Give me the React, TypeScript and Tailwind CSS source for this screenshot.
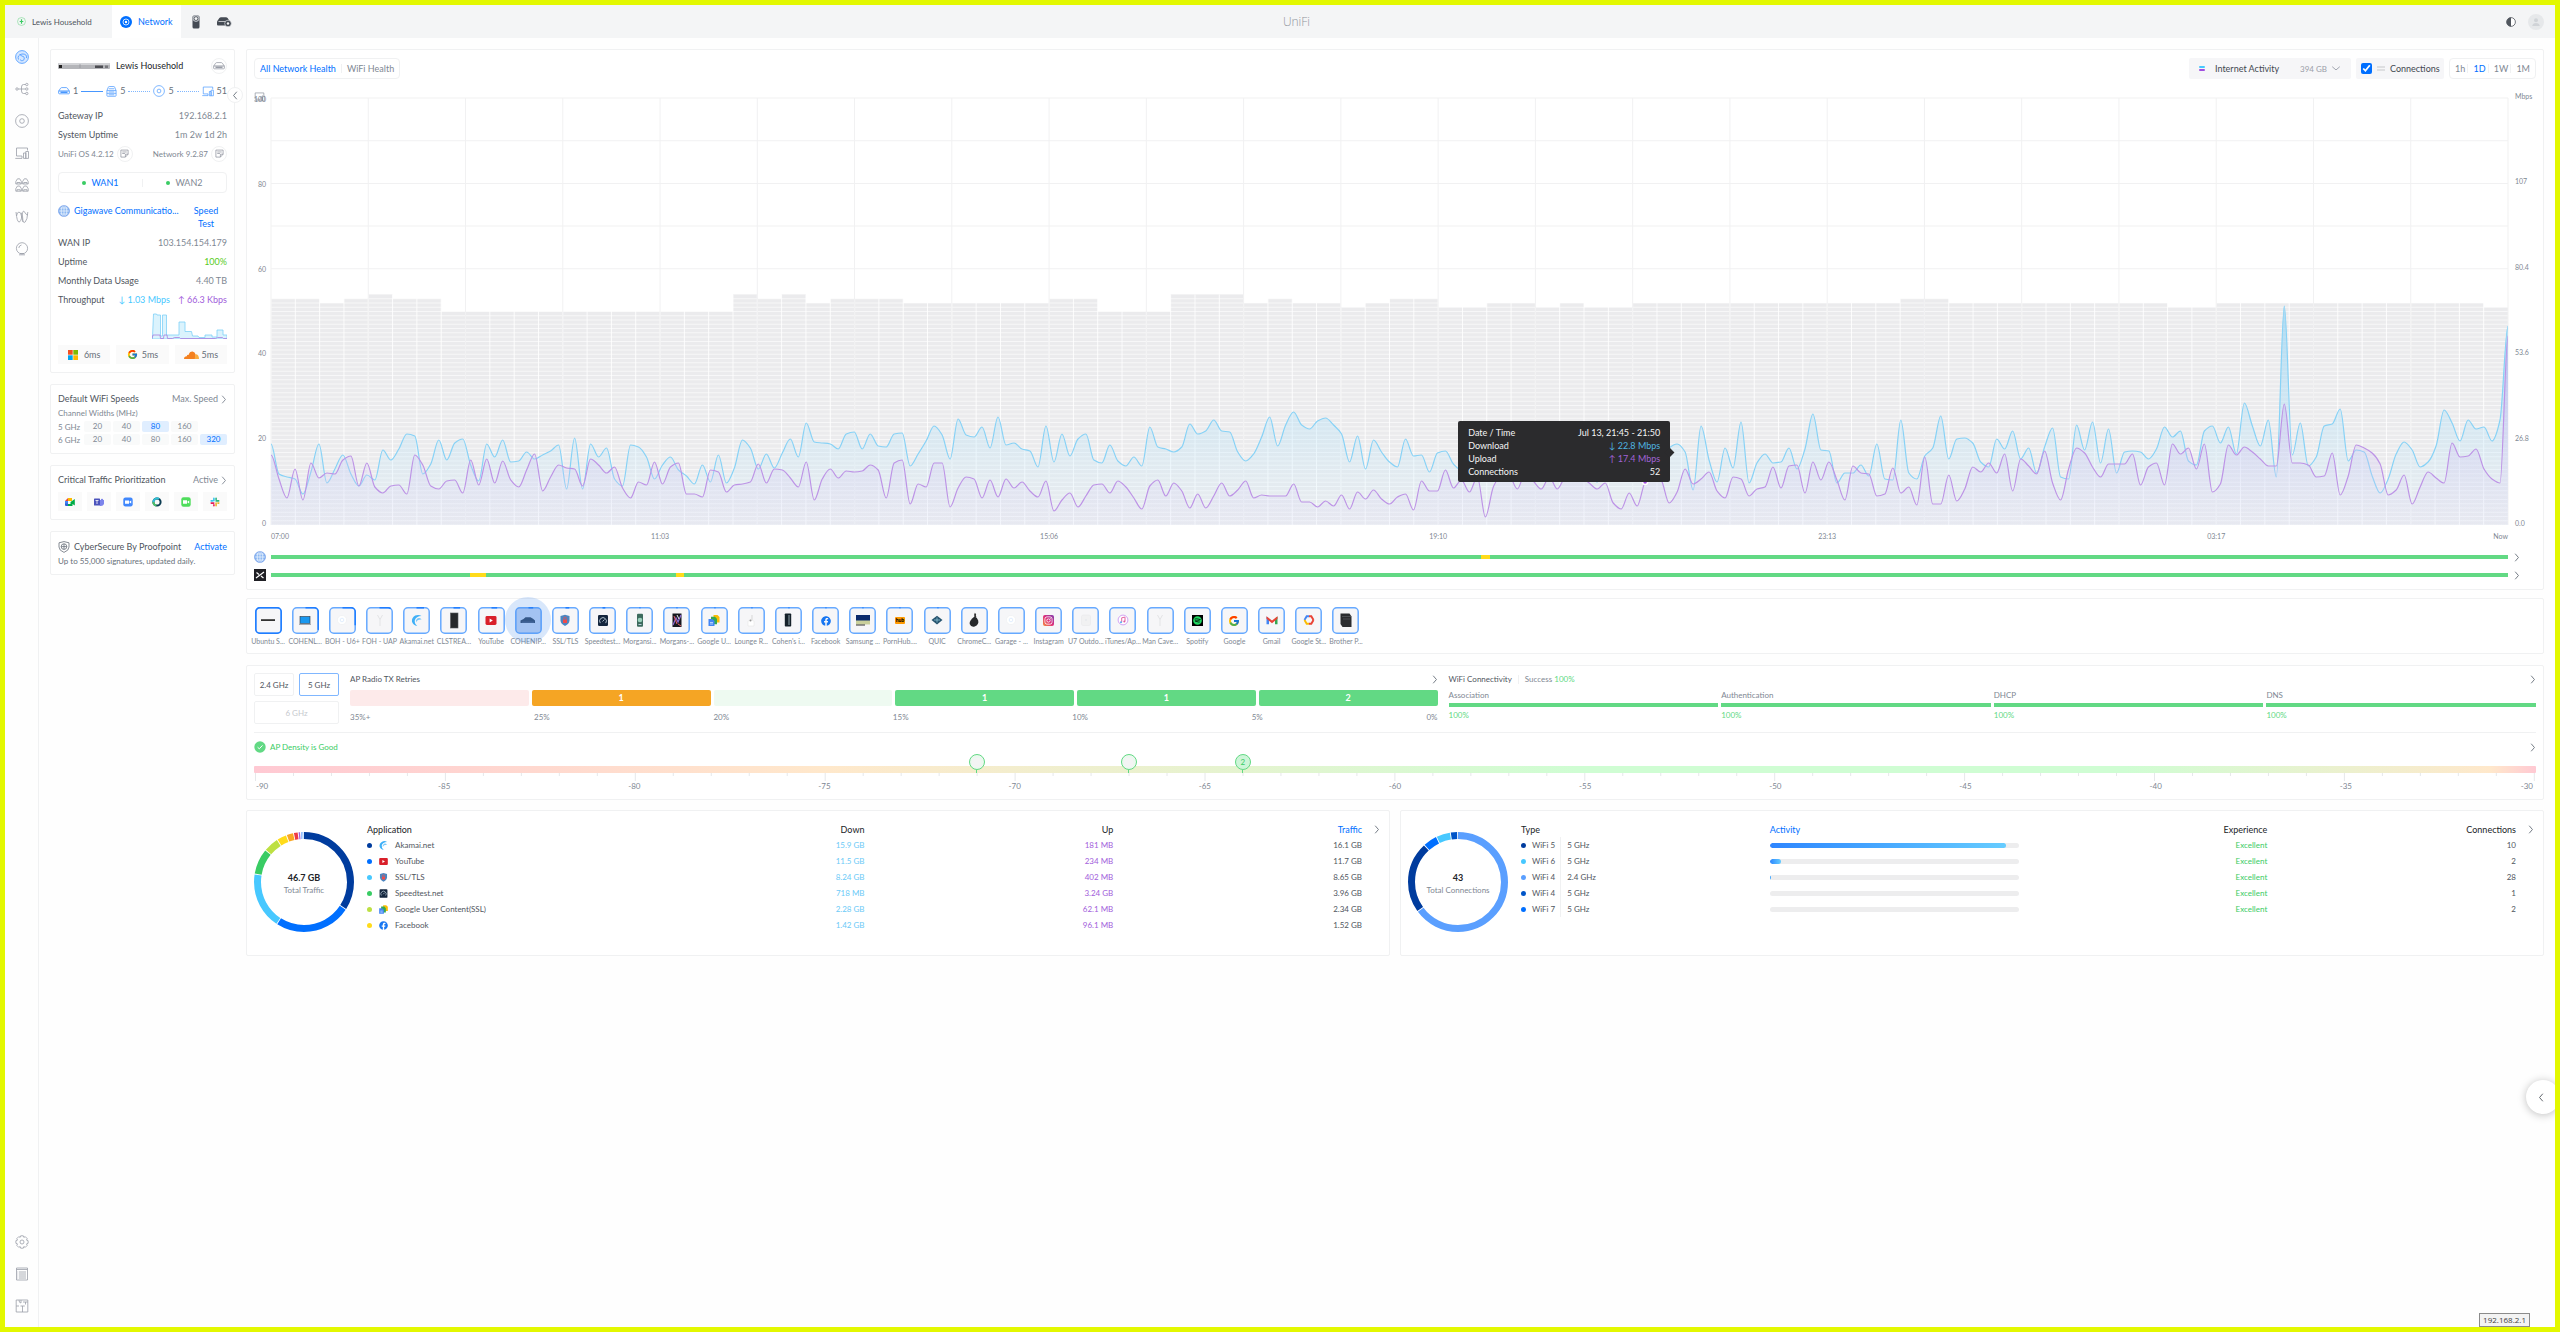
import { useState, type ReactNode } from "react";
import { FcGoogle } from "react-icons/fc";
import { FaFacebook, FaInstagram, FaSpotify } from "react-icons/fa";

const BAR_COUNTS = [
  53, 53, 52, 53, 54, 53, 53, 50, 50, 50, 50, 50, 50, 50, 50, 50, 50, 50, 50, 54, 53, 54, 52, 53, 53, 53, 52, 52, 52,
  52, 52, 52, 53, 53, 50, 50, 50, 54, 54, 54, 52, 53, 52, 52, 51, 52, 53, 53, 51, 51, 52, 52, 51, 52, 51, 51, 52, 52,
  52, 52, 52, 52, 52, 52, 52, 52, 52, 53, 53, 52, 52, 52, 52, 52, 52, 52, 52, 52, 51, 51, 52, 52, 52, 52, 52, 52, 52,
  52, 52, 52, 52, 51,
];

const DOWNLOAD = [
  81, 51, 48, 46, 31, 53, 81, 42, 56, 70, 51, 39, 50, 45, 75, 65, 76, 91, 89, 51, 61, 85, 65, 82, 86, 60, 44, 81, 68,
  85, 63, 64, 73, 66, 70, 74, 80, 36, 87, 36, 81, 68, 77, 46, 39, 80, 78, 68, 46, 60, 68, 55, 49, 41, 60, 43, 70, 42,
  57, 85, 77, 56, 71, 57, 72, 86, 68, 102, 83, 82, 81, 76, 91, 93, 76, 91, 79, 78, 91, 92, 59, 71, 84, 99, 90, 66,
  106, 90, 88, 98, 77, 108, 80, 82, 76, 74, 58, 99, 63, 91, 69, 86, 91, 65, 62, 80, 64, 59, 68, 59, 98, 78, 76, 73,
  78, 101, 91, 94, 105, 94, 93, 73, 64, 71, 88, 108, 79, 100, 113, 100, 96, 104, 107, 100, 91, 63, 89, 56, 85, 73, 63,
  58, 86, 69, 70, 53, 72, 74, 61, 55, 80, 60, 48, 70, 62, 85, 66, 50, 72, 80, 58, 66, 75, 62, 70, 58, 43, 60, 72, 85,
  64, 60, 73, 88, 60, 77, 81, 73, 35, 99, 65, 43, 77, 57, 103, 42, 62, 71, 62, 63, 77, 56, 76, 111, 75, 74, 42, 52,
  52, 60, 49, 81, 46, 45, 105, 52, 46, 69, 77, 109, 66, 86, 87, 82, 63, 58, 86, 76, 94, 66, 77, 52, 78, 97, 48, 46,
  100, 75, 103, 62, 96, 52, 73, 74, 73, 66, 76, 98, 88, 94, 64, 60, 94, 99, 82, 98, 71, 122, 99, 79, 105, 48, 219, 70,
  102, 59, 68, 99, 101, 116, 64, 75, 73, 49, 32, 46, 71, 83, 75, 58, 63, 79, 115, 102, 84, 105, 96, 98, 84, 105, 199,
];

const UPLOAD = [
  70, 46, 27, 56, 25, 62, 47, 52, 51, 65, 69, 39, 62, 38, 32, 39, 40, 31, 70, 60, 39, 36, 44, 45, 32, 65, 40, 66, 42,
  64, 45, 38, 55, 71, 34, 48, 60, 57, 56, 39, 66, 60, 52, 58, 37, 27, 43, 40, 63, 41, 58, 62, 31, 31, 28, 55, 53, 33,
  40, 41, 43, 61, 42, 56, 55, 47, 38, 63, 25, 46, 56, 47, 54, 53, 54, 60, 55, 27, 62, 65, 21, 41, 38, 62, 62, 18, 37,
  48, 46, 27, 45, 28, 46, 37, 43, 34, 28, 44, 14, 25, 32, 18, 29, 40, 41, 32, 44, 38, 27, 16, 39, 45, 29, 42, 34, 17,
  31, 17, 29, 42, 29, 35, 44, 27, 30, 29, 29, 29, 41, 23, 23, 18, 24, 19, 30, 16, 33, 26, 35, 26, 21, 28, 31, 15, 44,
  34, 34, 55, 37, 45, 33, 48, 8, 38, 50, 49, 36, 52, 44, 36, 48, 36, 48, 52, 48, 42, 36, 42, 22, 16, 32, 19, 43, 50,
  45, 22, 33, 56, 41, 46, 53, 34, 27, 48, 46, 29, 36, 38, 58, 37, 59, 60, 32, 63, 45, 63, 45, 25, 59, 52, 51, 29, 31,
  57, 32, 38, 20, 68, 21, 21, 50, 24, 36, 58, 53, 62, 52, 71, 34, 66, 59, 51, 74, 42, 25, 56, 77, 72, 58, 48, 61, 61,
  61, 71, 40, 58, 62, 40, 81, 71, 77, 56, 81, 33, 41, 80, 70, 78, 73, 66, 59, 59, 121, 62, 62, 60, 48, 49, 72, 30, 49,
  80, 77, 72, 61, 30, 35, 50, 21, 38, 53, 47, 42, 82, 68, 69, 76, 56, 46, 42, 189,
];

const CHART_W = 2236;
const CHART_H = 427;

// monotone cubic through evenly spaced samples
function linePath(values: number[]) {
  const dx = CHART_W / (values.length - 1);
  const slope = values.map((v, i) => {
    if (i === 0 || i === values.length - 1) return 0;
    const a = v - values[i - 1];
    const b = values[i + 1] - v;
    if (a * b <= 0) return 0;
    return (2 * a * b) / (a + b);
  });
  let d = `M0 ${CHART_H - values[0]}`;
  for (let i = 1; i < values.length; i++) {
    const x0 = (i - 1) * dx;
    const x1 = i * dx;
    const c0 = CHART_H - values[i - 1] - slope[i - 1] / 3;
    const c1 = CHART_H - values[i] + slope[i] / 3;
    d += `C${(x0 + dx / 3).toFixed(1)} ${c0.toFixed(1)} ${(x1 - dx / 3).toFixed(1)} ${c1.toFixed(1)} ${x1.toFixed(1)} ${CHART_H - values[i]}`;
  }
  return d;
}

const card = "rounded-[2px] border border-[#f0f1f2] bg-white";

function Chevron({ className = "" }: { className?: string }) {
  return (
    <svg viewBox="0 0 6 10" className={`h-[9px] w-[6px] shrink-0 ${className}`} fill="none" stroke="currentColor">
      <path d="M1 0.8L4.6 5L1 9.2" />
    </svg>
  );
}

function Globe() {
  return (
    <svg viewBox="0 0 12 12" className="h-3 w-3 shrink-0" fill="none">
      <circle cx="6" cy="6" r="5.6" fill="#8db9f3" />
      <path d="M6 .4v11.2M.4 6h11.2M1.4 3h9.2M1.4 9h9.2" stroke="#fff" strokeWidth=".6" />
      <ellipse cx="6" cy="6" rx="2.8" ry="5.6" stroke="#fff" strokeWidth=".6" />
      <circle cx="6" cy="6" r="5.4" stroke="#6b98e8" strokeWidth=".7" />
    </svg>
  );
}

function GatewayIcon() {
  return (
    <svg viewBox="0 0 12 8" className="h-2 w-3" fill="none" stroke="currentColor" strokeWidth=".8">
      <path d="M.6 4.2L2.6 1.2Q3 .6 3.8 .6h4.4Q9 .6 9.4 1.2L11.4 4.2v1.8q0 .8-.8.8H1.4q-.8 0-.8-.8z" />
      <path d="M.6 4h10.8M2.5 5.4h7" strokeWidth="1.1" />
    </svg>
  );
}

function SwitchIcon() {
  return (
    <svg viewBox="0 0 12 12" className="h-[11px] w-[11px]" fill="none" stroke="currentColor" strokeWidth=".8">
      <path d="M1 5l1.5-3.6Q2.7.6 3.5.6h5q.8 0 1 .8L11 5v5.4q0 .8-.8.8H1.8q-.8 0-.8-.8z" />
      <path d="M1 5h10M1 8h10M3 6.5h6M3 9.6h6M3 3h6" />
    </svg>
  );
}

function ApIcon() {
  return (
    <svg viewBox="0 0 14 14" className="h-3 w-3" fill="none" stroke="currentColor" strokeWidth=".8">
      <circle cx="7" cy="7" r="6.3" />
      <circle cx="7" cy="7" r="2.2" />
    </svg>
  );
}

function ClientsIcon({ className = "h-[11px] w-3" }: { className?: string }) {
  return (
    <svg viewBox="0 0 14 12" className={className} fill="none" stroke="currentColor" strokeWidth=".8">
      <path d="M12.5 3.5V.8H1.5v8H7M.3 10.8H7V8.8M13.3 11H8.6V6h2v5" />
      <path d="M10.6 11V4.5h2.7V11" />
    </svg>
  );
}

function NoteButton({ label }: { label: string }) {
  return (
    <button
      aria-label={label}
      className="flex h-4 w-4 items-center justify-center rounded-full border border-[#f0f1f2] text-[#8b909a]"
    >
      <svg viewBox="0 0 10 10" className="h-[9px] w-[9px]" fill="none" stroke="currentColor" strokeWidth=".8">
        <path d="M1 1.2h8v4.6L6 9H1zM9 5.8H6V9M2.5 3.3h5M2.5 5h3" />
      </svg>
    </button>
  );
}

function TopBar() {
  return (
    <header className="flex h-[33px] items-stretch bg-[#f4f5f6] text-[#50565e]">
      <button className="flex w-[107px] items-center gap-[6px] pl-3 text-[8px]">
        <svg viewBox="0 0 10 10" className="h-[9px] w-[9px]" fill="none">
          <circle cx="5" cy="5" r="4.4" stroke="#7fdb98" strokeWidth=".7" />
          <path d="M5 2.5v5M3 5h4" stroke="#39cc64" strokeWidth="1.3" />
        </svg>
        Lewis Household
      </button>
      <button className="flex w-[69px] items-center gap-[6px] bg-white pl-2 text-[9px] text-[#006fff]">
        <svg viewBox="0 0 12 12" className="h-3 w-3" fill="none">
          <circle cx="6" cy="6" r="6" fill="#006fff" />
          <circle cx="6" cy="6" r="3" stroke="#fff" strokeWidth=".8" />
          <circle cx="6" cy="6" r="1.2" fill="#fff" />
        </svg>
        Network
      </button>
      <button aria-label="Protect" className="flex w-[29px] items-center justify-center">
        <svg viewBox="0 0 8 14" className="h-[14px] w-2">
          <rect x=".5" y=".5" width="7" height="13" rx="1.5" fill="#454b54" />
          <circle cx="4" cy="3.6" r="3.3" fill="#b9bdc3" />
          <circle cx="4" cy="3.6" r="1.9" fill="#f4f5f6" stroke="#454b54" strokeWidth=".8" />
        </svg>
      </button>
      <button aria-label="Devices" className="flex w-[29px] items-center justify-center">
        <svg viewBox="0 0 15 10" className="h-[10px] w-[15px]">
          <path d="M0 4.5L2.4 1Q3 .2 4 .2h5q1 0 1.6.8l1.5 2.3V8.5H1Q0 8.5 0 7.5z" fill="#454b54" />
          <path d="M1.5 4.5h8" stroke="#f4f5f6" strokeWidth=".7" />
          <circle cx="11" cy="6.5" r="3.3" fill="#454b54" stroke="#f4f5f6" strokeWidth=".6" />
          <circle cx="11" cy="6.5" r="1.2" fill="#f4f5f6" />
        </svg>
      </button>
      <div className="flex flex-1 items-center pr-[11px]">
        <div className="flex flex-1 justify-center pr-[152px] font-['Open_Sans','Noto_Sans',sans-serif] text-xs font-light text-[#8f949c]">
          UniFi
        </div>
        <div className="flex items-center gap-3">
          <button aria-label="Theme">
            <svg viewBox="0 0 10 10" className="h-[10px] w-[10px]">
              <circle cx="5" cy="5" r="4.4" fill="#fff" stroke="#50565e" strokeWidth=".8" />
              <path d="M5 .6a4.4 4.4 0 0 0 0 8.8z" fill="#50565e" />
            </svg>
          </button>
          <button aria-label="Account" className="flex h-4 w-4 items-center justify-center rounded-full bg-[#e6e8ea]">
            <svg viewBox="0 0 10 10" className="h-[10px] w-[10px]" fill="#d0d3d7">
              <circle cx="5" cy="3.2" r="2" />
              <path d="M1.2 9q.5-3 3.8-3t3.8 3z" />
            </svg>
          </button>
        </div>
      </div>
    </header>
  );
}

const railTop: { name: string; art: ReactNode }[] = [
  {
    name: "Dashboard",
    art: (
      <>
        <circle cx="7" cy="7" r="6.4" fill="#d5e7ff" />
        <path d="M3.5 9.5Q1.8 5.2 7 4q5.2-.3 4.5 4M5 9.5a2.3 2.3 0 1 0 2-3.4L4.7 4.5" />
      </>
    ),
  },
  {
    name: "Topology",
    art: (
      <>
        <circle cx="2" cy="7" r="1.2" />
        <circle cx="11.8" cy="2.5" r="1.2" />
        <circle cx="11.8" cy="7" r="1.2" />
        <circle cx="11.8" cy="11.5" r="1.2" />
        <path d="M3.2 7h7.4M10.6 2.5H8.5Q6.5 2.5 6.5 5v4q0 2.5 2 2.5h2.1" />
      </>
    ),
  },
  {
    name: "UniFi Devices",
    art: (
      <>
        <circle cx="7" cy="7" r="6.4" />
        <circle cx="7" cy="7" r="2.3" />
      </>
    ),
  },
  {
    name: "Client Devices",
    art: <path d="M12.5 4.5V2H1.5v8H7M.3 12.4H7V10M13.5 12.4H8.5V7h2.3v5.4V5.5h2.7z" />,
  },
  {
    name: "Ports",
    art: (
      <>
        <path d="M.8 6V3.5L2.5.8h2.2L6.4 3.5V6zM7.6 6V3.5L9.3.8h2.2l1.7 2.7V6zM.8 13.2v-2.5L2.5 8h2.2l1.7 2.7v2.5zM7.6 13.2v-2.5L9.3 8h2.2l1.7 2.7v2.5z" />
        <path d="M2 6V4.5h3.2V6M8.8 6V4.5H12V6M2 13.2v-1.5h3.2v1.5M8.8 13.2v-1.5H12v1.5" />
      </>
    ),
  },
  {
    name: "Radios",
    art: <path d="M1 2q1 10 3 10T7 5.5 9.5 2 13 5M1.5 6Q2 2 4 2t3 6 3.2 4 2.6-10M6 2.5Q8 5 8 12" />,
  },
  {
    name: "Insights",
    art: (
      <>
        <circle cx="7" cy="6.3" r="5.6" />
        <path d="M4 12.8h6M5 11.5h4M3.8 6Q4 3.5 6.5 3" />
      </>
    ),
  },
];

const railBottom: { name: string; art: ReactNode }[] = [
  {
    name: "Settings",
    art: (
      <>
        <path d="M5.7.8h2.6l.5 1.5 1.5-.6 1.9 1.9-.7 1.5 1.6.6v2.6l-1.6.6.7 1.5-1.9 1.9-1.5-.7-.5 1.6H5.7l-.5-1.6-1.5.7-1.9-1.9.7-1.5-1.6-.6V5.7l1.6-.6-.7-1.5 1.9-1.9 1.5.6z" />
        <circle cx="7" cy="7" r="2" />
      </>
    ),
  },
  {
    name: "System Log",
    art: <path d="M1.5 1h11v12h-11zM1.5 2.5h11M4 5h7M4 7h7M4 9h7M4 11h7M2.5 5h.7M2.5 7h.7M2.5 9h.7M2.5 11h.7" />,
  },
  {
    name: "Integrations",
    art: <path d="M1.2 1h11.6v12H1.2zM1.2 7H4M5.5 7h4.3M7.5 7v6M4 1q0 3 2 3V1M8 3h4.8M10.5 3v2.5" />,
  },
];

function RailButton({ name, art, active }: { name: string; art: ReactNode; active?: boolean }) {
  return (
    <button aria-label={name} className={active ? "text-[#4797ff]" : "text-[#9a9ea8]"}>
      <svg viewBox="0 0 14 14" className="block h-[14px] w-[14px]" fill="none" stroke="currentColor" strokeWidth=".8">
        {art}
      </svg>
    </button>
  );
}

function Rail() {
  return (
    <nav className="flex w-[34px] shrink-0 flex-col items-center justify-between border-r border-[#f0f1f2] pt-3 pb-[14px]">
      <div className="flex flex-col gap-[18px]">
        {railTop.map((r, i) => (
          <RailButton key={r.name} name={r.name} art={r.art} active={i === 0} />
        ))}
      </div>
      <div className="flex flex-col gap-[18px]">
        {railBottom.map((r) => (
          <RailButton key={r.name} name={r.name} art={r.art} />
        ))}
      </div>
    </nav>
  );
}

function InfoRow({ label, children }: { label: string; children: ReactNode }) {
  return (
    <div className="flex h-[19px] items-center justify-between">
      <span className="text-[#50565e]">{label}</span>
      <span className="text-[#808893]">{children}</span>
    </div>
  );
}

function GatewayCard() {
  return (
    <section className={`${card} relative px-[7px] pt-[6px] pb-2`}>
      <div className="flex h-5 items-center gap-[6px]">
        <svg viewBox="0 0 52 6" className="h-[6px] w-[52px]">
          <rect width="52" height="6" rx="1" fill="#b4b5b9" />
          <rect width="52" height="2" rx="1" fill="#d3d4d7" />
          <rect x="1" y="2" width="3" height="3" fill="#222" />
          <path d="M22 1v4" stroke="#8a8b90" strokeWidth=".6" />
          <rect x="37" y="2.5" width="8" height="2.5" fill="#4c4d52" />
          <rect x="47" y="2.5" width="3" height="2.5" fill="#77787d" />
        </svg>
        <h2 className="flex-1 text-[#212327]">Lewis Household</h2>
        <button
          aria-label="Gateway settings"
          className="flex h-4 w-4 items-center justify-center rounded-full border border-[#f0f1f2] text-[#9a9ea8]"
        >
          <GatewayIcon />
        </button>
      </div>

      <div className="flex h-[30px] items-center text-[#676f79]">
        <span className="mr-[3px] text-[#4797ff]">
          <GatewayIcon />
        </span>
        1
        <span className="mx-[3px] flex-1 border-t border-[#4797ff]" />
        <span className="mr-[3px] text-[#4797ff]">
          <SwitchIcon />
        </span>
        5
        <span className="mx-[3px] flex-1 border-t border-dotted border-[#80b7ff]" />
        <span className="mr-[3px] text-[#4797ff]">
          <ApIcon />
        </span>
        5
        <span className="mx-[3px] flex-1 border-t border-dotted border-[#80b7ff]" />
        <span className="mr-[3px] text-[#4797ff]">
          <ClientsIcon />
        </span>
        51
      </div>

      <InfoRow label="Gateway IP">192.168.2.1</InfoRow>
      <InfoRow label="System Uptime">1m 2w 1d 2h</InfoRow>
      <div className="flex h-[19px] items-center justify-between text-[8px] text-[#808893]">
        <span className="flex items-center gap-[3px]">
          UniFi OS 4.2.12 <NoteButton label="UniFi OS release notes" />
        </span>
        <span className="flex items-center gap-[3px]">
          Network 9.2.87 <NoteButton label="Network release notes" />
        </span>
      </div>

      <div className="mt-[9px] flex h-[21px] items-center rounded-[4px] border border-[#f0f1f2]">
        <button className="flex flex-1 items-center justify-center gap-[5px] text-[#006fff]">
          <span className="h-1 w-1 rounded-full bg-[#39cc64]" /> WAN1
        </button>
        <span className="h-2 border-l border-[#f0f1f2]" />
        <button className="flex flex-1 items-center justify-center gap-[5px] text-[#808893]">
          <span className="h-1 w-1 rounded-full bg-[#39cc64]" /> WAN2
        </button>
      </div>

      <div className="mt-[11px] mb-[3px] flex items-start text-[#006fff]">
        <div className="flex min-w-0 flex-1 items-center gap-1 leading-[13px]">
          <Globe />
          <span className="truncate">Gigawave Communicatio...</span>
        </div>
        <button className="w-[42px] px-[5px] text-center leading-[13px]">Speed Test</button>
      </div>

      <InfoRow label="WAN IP">103.154.154.179</InfoRow>
      <InfoRow label="Uptime">
        <span className="text-[#59cc1d]">100%</span>
      </InfoRow>
      <InfoRow label="Monthly Data Usage">4.40 TB</InfoRow>
      <InfoRow label="Throughput">
        <span className="mr-2 text-[#47c8ff]">↓ 1.03 Mbps</span>
        <span className="text-[#a15ddb]">↑ 66.3 Kbps</span>
      </InfoRow>

      <svg viewBox="0 0 75 26" className="mt-1 ml-auto block h-[26px] w-[75px]" fill="none">
        <path
          d="M.5 24L1.5 1H4.500L5 2H8.500V23H10.500V2H14.500V22H27V9H33V18.500H39.500L40.500 23H46L47 24.500H53V22H60V24H65V17H71V22H75V26H.5z"
          fill="#dbf3fd"
          stroke="#7fd0f7"
          strokeWidth=".8"
        />
        <path d="M0 25.5L1 22h7l.5 3.5h3L12 22h3l.5 3.5h5l2-1h5l1 1h35l2-1h5l1 1H75" stroke="#a97fe0" strokeWidth=".8" />
      </svg>

      <div className="mt-[6px] grid grid-cols-3 gap-[6px] text-[#676f79]">
        <div className="flex h-[19px] items-center justify-center gap-[6px] bg-[#fafafa]">
          <svg viewBox="0 0 10 10" className="h-[10px] w-[10px]">
            <path d="M0 0h4.7v4.7H0z" fill="#f25022" />
            <path d="M5.3 0H10v4.7H5.3z" fill="#7fba00" />
            <path d="M0 5.3h4.7V10H0z" fill="#00a4ef" />
            <path d="M5.3 5.3H10V10H5.3z" fill="#ffb900" />
          </svg>
          6ms
        </div>
        <div className="flex h-[19px] items-center justify-center gap-1 bg-[#fafafa]">
          <FcGoogle className="h-[11px] w-[11px]" /> 5ms
        </div>
        <div className="flex h-[19px] items-center justify-center gap-[3px] bg-[#fafafa]">
          <svg viewBox="0 0 15 8" className="h-2 w-[15px]">
            <path d="M0 8Q0 5.2 2.8 5.2 3 3.6 4.6 3.9 5.6.3 8.6.5 11 .8 11.6 3.5V8z" fill="#f48120" />
            <path d="M10.6 8l1-4.7Q15 3.5 15 8z" fill="#faad3f" />
          </svg>
          5ms
        </div>
      </div>

      <button
        aria-label="Collapse panel"
        className="absolute top-[37px] -right-[9px] flex h-4 w-4 items-center justify-center rounded-full border border-[#f0f1f2] bg-white text-[#676f79]"
      >
        <Chevron className="rotate-180" />
      </button>
    </section>
  );
}

const channelRows = [
  { band: "5 GHz", widths: ["20", "40", "80", "160"], active: "80" },
  { band: "6 GHz", widths: ["20", "40", "80", "160", "320"], active: "320" },
];

function WifiSpeedsCard() {
  return (
    <section className={`${card} px-[7px] pt-[7px] pb-[7px]`}>
      <div className="flex h-[14px] items-center justify-between text-[#50565e]">
        <h2>Default WiFi Speeds</h2>
        <button className="flex items-center gap-[3px] text-[#808893]">
          Max. Speed <Chevron />
        </button>
      </div>
      <div className="h-[14px] text-[8px] leading-[15px] text-[#808893]">Channel Widths (MHz)</div>
      {channelRows.map((row) => (
        <div key={row.band} className="grid h-[13px] grid-cols-[24px_repeat(5,1fr)] items-center gap-[2px] text-[8px] text-[#808893]">
          <span>{row.band}</span>
          {row.widths.map((w) => (
            <span
              key={w}
              className={`h-[11px] rounded-[2px] text-center leading-[11px] ${
                w === row.active ? "bg-[#e0eeff] text-[#006fff]" : "bg-[#f9fafa]"
              }`}
            >
              {w}
            </span>
          ))}
        </div>
      ))}
    </section>
  );
}

const priorityApps: { name: string; art: ReactNode }[] = [
  {
    name: "Google Meet",
    art: (
      <>
        <path d="M0 4l3-3v3z" fill="#ea4335" />
        <path d="M3 1h4v3H3z" fill="#fbbc04" />
        <path d="M0 4h3v3H0z" fill="#4285f4" />
        <path d="M3 9V7h2.500V5L9.800 2v6.500L7.500 7v2z" fill="#00ac47" />
        <path d="M0 6.5h3V9H1Q0 9 0 8z" fill="#2a62d8" />
      </>
    ),
  },
  {
    name: "Microsoft Teams",
    art: (
      <>
        <circle cx="8" cy="3" r="1.2" fill="#7b83eb" />
        <path d="M4 3h6v4q-1 2.5-4 2z" fill="#7b83eb" />
        <rect x="0" y="1.5" width="6" height="7" rx=".6" fill="#4b53bc" />
        <path d="M1.5 3.5h3M3 3.5v3.5" stroke="#fff" strokeWidth=".8" />
      </>
    ),
  },
  {
    name: "Zoom",
    art: (
      <>
        <rect x=".3" y=".5" width="9.4" height="9" rx="2.2" fill="#4087fc" />
        <path d="M2 3.4h4v3.4H2zM6.5 4.6l1.7-1v3l-1.7-1z" fill="#fff" />
      </>
    ),
  },
  {
    name: "Webex",
    art: (
      <>
        <circle cx="5" cy="5" r="3.6" fill="none" stroke="#0c3c52" strokeWidth="2" />
        <path d="M1.4 5A3.6 3.6 0 0 1 7 2" fill="none" stroke="#2fc1d6" strokeWidth="2" />
        <path d="M1.4 5a3.6 3.6 0 0 0 3 3.6" fill="none" stroke="#4bbf6b" strokeWidth="2" />
      </>
    ),
  },
  {
    name: "FaceTime",
    art: (
      <>
        <rect x=".3" y=".3" width="9.4" height="9.4" rx="2.2" fill="#4fdd5c" />
        <path d="M2 3.2h4v3.6H2zM6.5 4.6l1.7-1v3l-1.7-1z" fill="#fff" />
      </>
    ),
  },
  {
    name: "Slack",
    art: (
      <g fill="none" strokeWidth="1.6" strokeLinecap="round">
        <path d="M3.9 1.2v2.6M1.2 3.9h1.2" stroke="#36c5f0" />
        <path d="M6.1 3.9h2.6M6.1 1.2v1.2" stroke="#2eb67d" />
        <path d="M6.1 6.1v2.6M8.8 6.1H7.9" stroke="#ecb22e" />
        <path d="M1.2 6.1h2.6M3.9 8.8V7.9" stroke="#e01e5a" />
      </g>
    ),
  },
];

function Sidebar() {
  return (
    <aside className="flex w-[185px] shrink-0 flex-col gap-[11px] text-[9px]">
      <GatewayCard />
      <WifiSpeedsCard />
      <section className={`${card} px-[7px] pt-[7px] pb-2`}>
        <div className="flex h-[14px] items-center justify-between text-[#50565e]">
          <h2>Critical Traffic Prioritization</h2>
          <button className="flex items-center gap-[3px] text-[#808893]">
            Active <Chevron />
          </button>
        </div>
        <div className="mt-[5px] grid grid-cols-6 gap-[5px]">
          {priorityApps.map((a) => (
            <div key={a.name} title={a.name} className="flex h-[19px] items-center justify-center bg-[#fafafa]">
              <svg viewBox="0 0 10 10" className="h-[10px] w-[10px]">
                {a.art}
              </svg>
            </div>
          ))}
        </div>
      </section>
      <section className={`${card} px-[7px] pt-[7px] pb-[6px]`}>
        <div className="flex h-[15px] items-center justify-between text-[#50565e]">
          <h2 className="flex items-center gap-[4px]">
            <svg viewBox="0 0 12 12" className="h-3 w-3 text-[#676f79]" fill="none" stroke="currentColor" strokeWidth=".8">
              <path d="M6 .6l5 1.2V6q0 3.5-5 5.4Q1 9.5 1 6V1.8z" />
              <circle cx="6" cy="5.6" r="2.8" />
              <path d="M6 2.8v5.6M3.2 5.6h5.6" />
            </svg>
            CyberSecure By Proofpoint
          </h2>
          <a href="#activate" className="text-[#006fff]">
            Activate
          </a>
        </div>
        <p className="h-[14px] text-[8px] leading-[14px] text-[#676f79]">Up to 55,000 signatures, updated daily.</p>
      </section>
    </aside>
  );
}

function ActivityChart() {
  const colW = CHART_W / BAR_COUNTS.length;
  const unit = CHART_H / 100;
  const down = linePath(DOWNLOAD);
  const up = linePath(UPLOAD);
  return (
    <svg
      viewBox={`0 0 ${CHART_W} ${CHART_H}`}
      preserveAspectRatio="none"
      className="block h-full w-full overflow-visible"
      fill="none"
    >
      <defs>
        <linearGradient id="down" x1="0" y1="0" x2="0" y2="1">
          <stop offset="0" stopColor="#7fcdf5" stopOpacity=".6" />
          <stop offset="1" stopColor="#dff2fb" stopOpacity=".15" />
        </linearGradient>
        <linearGradient id="up" x1="0" y1="0" x2="0" y2="1">
          <stop offset="0" stopColor="#b99be8" stopOpacity=".5" />
          <stop offset="1" stopColor="#dcd8f8" stopOpacity=".15" />
        </linearGradient>
      </defs>
      {BAR_COUNTS.map((n, i) => (
        <rect key={i} x={i * colW} y={CHART_H - n * unit} width={colW} height={n * unit} fill="#ebebed" />
      ))}
      {Array.from({ length: 54 }, (_, i) => (
        <path key={i} d={`M0 ${CHART_H - i * unit}H${CHART_W}`} stroke="#fff" strokeOpacity=".6" />
      ))}
      {BAR_COUNTS.map((_, i) => (
        <path key={i} d={`M${i * colW} ${CHART_H}V${CHART_H - 54 * unit}`} stroke="#fff" strokeOpacity=".8" />
      ))}
      {[0, 1, 2, 3, 4].map((i) => (
        <path key={i} d={`M0 ${i * 10 * unit}H${CHART_W}`} stroke="#f1f1f2" />
      ))}
      {Array.from({ length: 24 }, (_, i) => (
        <path key={i} d={`M${i * colW * 4} 0V${CHART_H}`} stroke="#f1f1f2" />
      ))}
      <path d={`${down}V${CHART_H}H0z`} fill="url(#down)" />
      <path d={down} stroke="#87d2f6" strokeWidth="1.2" />
      <path d={`${up}V${CHART_H}H0z`} fill="url(#up)" />
      <path d={up} stroke="#bd93e6" strokeWidth="1.2" />
      <circle cx="1373.5" cy="384" r="2.5" fill="#a04fe0" stroke="#fff" strokeWidth="1.5" />
    </svg>
  );
}

function ChartTooltip() {
  return (
    <dl className="absolute top-[323px] left-[53.07%] grid w-[212px] grid-cols-[auto_1fr] rounded-[2px] bg-[#2b2b2d] px-[10px] pt-[5px] pb-1 text-[9px] leading-[13px] text-[#f4f5f6]">
      <dt>Date / Time</dt>
      <dd className="text-right">Jul 13, 21:45 - 21:50</dd>
      <dt>Download</dt>
      <dd className="text-right text-[#4fb4e0]">↓ 22.8 Mbps</dd>
      <dt>Upload</dt>
      <dd className="text-right text-[#a163d6]">↑ 17.4 Mbps</dd>
      <dt>Connections</dt>
      <dd className="text-right">52</dd>
      <span className="absolute top-[28px] -right-[3px] h-[7px] w-[7px] rotate-45 bg-[#2b2b2d]" />
    </dl>
  );
}

function ActivityCard() {
  const [tab, setTab] = useState("All Network Health");
  const [range, setRange] = useState("1D");
  return (
    <section className={`${card} px-[7px] pt-2 pb-2`}>
      <div className="flex h-[21px] items-stretch justify-between text-[9px]">
        <div className="flex items-center rounded-[4px] border border-[#f0f1f2] px-[5px]">
          {["All Network Health", "WiFi Health"].map((t, i) => (
            <button
              key={t}
              onClick={() => setTab(t)}
              className={`leading-[9px] ${i > 0 ? "ml-[5px] border-l border-[#f0f1f2] pl-[5px]" : ""} ${
                tab === t ? "text-[#006fff]" : "text-[#808893]"
              }`}
            >
              {t}
            </button>
          ))}
        </div>
        <div className="flex items-stretch gap-[5px]">
          <button
            aria-haspopup="listbox"
            className="flex w-[162px] items-center rounded-[2px] bg-[#f6f6f8] px-[10px] text-[#424850]"
          >
            <span className="mr-[10px] flex flex-col gap-px">
              <span className="h-[2px] w-[6px] rounded-[1px] bg-[#47c8ff]" />
              <span className="h-[2px] w-[6px] rounded-[1px] bg-[#a04fe0]" />
            </span>
            Internet Activity
            <span className="ml-auto text-[8px] text-[#9a9ea8]">394 GB</span>
            <Chevron className="mr-[2px] ml-[6px] rotate-90 text-[#9a9ea8]" />
          </button>
          <label className="flex w-[88px] items-center rounded-[2px] bg-[#f6f6f8] px-[5px] text-[#424850]">
            <input type="checkbox" defaultChecked className="h-[11px] w-[11px] accent-[#006fff]" />
            <span className="mx-[5px] flex flex-col gap-px">
              <span className="h-[2px] w-2 bg-[#dedfe1]" />
              <span className="h-[2px] w-2 bg-[#dedfe1]" />
            </span>
            Connections
          </label>
          <div className="flex w-[87px] items-center justify-between rounded-[4px] border border-[#f0f1f2] px-[5px]">
            {["1h", "1D", "1W", "1M"].map((r, i) => (
              <button
                key={r}
                onClick={() => setRange(r)}
                className={`leading-[9px] ${i > 0 ? "border-l border-[#f0f1f2] pl-[5px]" : ""} ${
                  range === r ? "text-[#006fff]" : "text-[#808893]"
                }`}
              >
                {r}
              </button>
            ))}
          </div>
        </div>
      </div>

      <div className="mt-[19px] grid grid-cols-[17px_1fr_28px] text-[7px] text-[#808893]">
        <div className="-mt-1 -mb-[3px] flex flex-col justify-between pr-[5px] text-right leading-[10px]">
          <span className="relative">
            <ClientsIcon className="absolute -top-[2px] left-0 h-[10px] w-[11px]" />
            100
          </span>
          <span>80</span>
          <span>60</span>
          <span>40</span>
          <span>20</span>
          <span>0</span>
        </div>
        <div className="relative h-[427px]">
          <ActivityChart />
          <ChartTooltip />
        </div>
        <div className="-mt-[7px] -mb-[3px] flex flex-col justify-between pl-[7px] leading-[10px]">
          <span>Mbps</span>
          <span>107</span>
          <span>80.4</span>
          <span>53.6</span>
          <span>26.8</span>
          <span>0.0</span>
        </div>
      </div>
      <div className="mt-[5px] mr-[28px] ml-[17px] grid h-3 grid-cols-[16fr_16fr_16fr_16fr_16fr_12fr] items-center text-[7px] text-[#808893]">
        <span>07:00</span>
        <span className="-translate-x-1/2 justify-self-start">11:03</span>
        <span className="-translate-x-1/2 justify-self-start">15:06</span>
        <span className="-translate-x-1/2 justify-self-start">19:10</span>
        <span className="-translate-x-1/2 justify-self-start">23:13</span>
        <span className="flex justify-between">
          <span className="-translate-x-1/2">03:17</span>
          <span>Now</span>
        </span>
      </div>

      <div className="mt-[9px] flex flex-col gap-[6px]">
        <div className="flex h-3 items-center">
          <Globe />
          <div className="ml-[5px] grid h-1 flex-1 grid-cols-[1209fr_9fr_1018fr] bg-[#62d984]">
            <span className="col-start-2 bg-[#ffdb1a]" />
          </div>
          <button aria-label="WAN1 details" className="flex w-[28px] pl-[6px] text-[#676f79]">
            <Chevron />
          </button>
        </div>
        <div className="flex h-3 items-center">
          <svg viewBox="0 0 12 12" className="h-3 w-3">
            <rect width="12" height="12" fill="#1f1f24" />
            <path d="M2 9l8-6M2.5 3.5l2.5 2M7 7l2.5 2" stroke="#fff" strokeWidth="1.2" />
          </svg>
          <div className="ml-[5px] grid h-1 flex-1 grid-cols-[199fr_16fr_190fr_8fr_1823fr] bg-[#62d984]">
            <span className="col-start-2 bg-[#ffdb1a]" />
            <span className="col-start-4 bg-[#ffdb1a]" />
          </div>
          <button aria-label="WAN2 details" className="flex w-[28px] pl-[6px] text-[#676f79]">
            <Chevron />
          </button>
        </div>
      </div>
    </section>
  );
}

const art = {
  server: <rect x="0" y="4.2" width="14" height="1.8" fill="#333" />,
  laptop: (
    <>
      <rect x="2" y="1.5" width="10" height="7" fill="#1998f0" stroke="#2a3440" strokeWidth=".6" />
      <path d="M1 9.2h12" stroke="#85898f" />
    </>
  ),
  disc: (
    <>
      <circle cx="7" cy="5" r="4.6" fill="#fff" stroke="#eceef0" strokeWidth=".6" />
      <circle cx="7" cy="5" r="1.8" fill="none" stroke="#cfe3fb" strokeWidth=".6" />
    </>
  ),
  antenna: <path d="M4.5 0L7 4.5 9.5 0M7 4.5V11" stroke="#e3e4e6" fill="none" />,
  akamai: (
    <g fill="#3fb0f7">
      <path d="M11.5 1Q8.500-1 5.200.6 1.400 2.800 2 6.800 3 10.400 7.300 11 4.300 8.600 4.800 5.200 6 1.200 11.500 1z" />
      <path d="M11.600 4.500Q9.500 2.200 7.300 3.500 5.500 5 6 7.500 7.300 4 11.600 4.500z" opacity=".7" />
    </g>
  ),
  tower: <rect x="3.5" y="-2" width="7.5" height="15" fill="#26282b" stroke="#55585c" strokeWidth=".6" />,
  youtube: (
    <>
      <rect x="1.5" y="1" width="11" height="9" rx="1.4" fill="#d9202a" />
      <path d="M5.6 3.5l3.2 2-3.2 2z" fill="#fff" />
    </>
  ),
  printer: (
    <>
      <path d="M-.5 5.500l3-1.500 2-1.800h5l2.500 1.500 2 1.800v2.500H-.5z" fill="#30353d" />
      <path d="M1 7.200h12" stroke="#6c7688" strokeWidth=".6" />
    </>
  ),
  shield: (
    <>
      <path d="M7-.2l4.5 1.3v4.2Q11.5 9 7 11 2.5 9 2.5 5.3V1.1z" fill="#4d86c0" />
      <path d="M5 4.5h4v3.5H5z" fill="#ee4b4b" />
      <path d="M5.7 4.5V3.4a1.3 1.3 0 0 1 2.6 0v1.1" stroke="#ee4b4b" strokeWidth=".8" fill="none" />
    </>
  ),
  speedtest: (
    <>
      <rect x="2" y="0" width="10" height="11" rx="1.2" fill="#14263e" />
      <path d="M4.3 8.1a3.4 3.4 0 1 1 5.400 0M6.5 6.5l2-2" stroke="#cfe0ea" strokeWidth=".8" fill="none" />
    </>
  ),
  watch: (
    <>
      <rect x="4" y="-1.3" width="6" height="13" rx="1" fill="#3d6b5e" />
      <circle cx="7" cy="5" r="2.3" fill="#9ad0bc" />
      <rect x="5.5" y="9" width="3" height="1" fill="#bcd" />
    </>
  ),
  phone: (
    <>
      <rect x="2.5" y="-1.5" width="9" height="13.5" fill="#17181f" />
      <path d="M3 10L6 3l2 4 3-7" stroke="#8d6bd6" strokeWidth="1.2" fill="none" />
      <path d="M4 1l3 8M8 9l3 2" stroke="#e8616a" />
      <path d="M7 0l2 4" stroke="#e9eef2" />
    </>
  ),
  gdocs: (
    <>
      <path d="M6.5 0h4l2 2v5.500h-6z" fill="#fbbc04" />
      <path d="M4 1.800h4l2 2v5.500H4z" fill="#34a853" />
      <path d="M1.500 4h4l2 2v5h-6z" fill="#4285f4" />
      <path d="M3 7.5h3M3 9h3" stroke="#fff" strokeWidth=".6" />
    </>
  ),
  vacuum: (
    <>
      <path d="M8 0v5" stroke="#ddd" strokeWidth="1.2" />
      <path d="M4 6q3-2 6 0v5H4z" fill="#fff" stroke="#e3e3e3" strokeWidth=".5" />
      <circle cx="6.5" cy="5.5" r="1" fill="#9a9a9a" />
    </>
  ),
  iphone: (
    <>
      <rect x="3.8" y="-1.5" width="6.4" height="13" rx=".8" fill="#16222a" />
      <path d="M8 0v10" stroke="#7e8f96" strokeWidth="1.2" />
    </>
  ),
  tv: (
    <>
      <rect x="0" y="0" width="14" height="6" fill="#0b2a6b" />
      <rect x="0" y="5.500" width="14" height="4" fill="#c9cf9b" />
      <path d="M0 10h9" stroke="#333" />
    </>
  ),
  quic: (
    <>
      <path d="M7 .8L12.5 5 7 9.4 1.5 5z" fill="#26536e" />
      <path d="M4 5h6M7 2.5v5" stroke="#8cc3d6" strokeWidth=".8" />
    </>
  ),
  dongle: (
    <>
      <path d="M8.5-1.5q-1 1 0 4" stroke="#333" strokeWidth="1.8" fill="none" />
      <path d="M7.5 1.5Q2 5.5 2.7 9q1.3 3.5 5 2.5 4.5-2 3.5-6-.8-3-3.7-4z" fill="#26282b" />
    </>
  ),
  ap: (
    <>
      <rect x="2.5" y="0" width="9" height="10.5" rx="1.5" fill="#f1f1f2" stroke="#e7e7e9" strokeWidth=".5" />
      <circle cx="7" cy="5" r=".8" fill="#dfe3e8" />
    </>
  ),
  itunes: (
    <>
      <circle cx="7" cy="5" r="4.9" fill="#fff" stroke="#c58cf0" strokeWidth=".8" />
      <path d="M5.7 7.2V2.8l3.3-.7v4.3" stroke="#e0569c" strokeWidth=".9" fill="none" />
      <circle cx="5" cy="7.2" r="1" fill="#5aa9f2" />
      <circle cx="8.3" cy="6.5" r="1" fill="#e0569c" />
    </>
  ),
  gmail: (
    <>
      <path d="M1.5 9.2V1.5L4 3.5v5.7z" fill="#4285f4" />
      <path d="M12.5 9.2V1.5L10 3.5v5.7z" fill="#34a853" />
      <path d="M1.5 1.2L7 5.6l5.5-4.4v2.6L7 8.2 1.5 3.8z" fill="#ea4335" />
    </>
  ),
  gstatic: (
    <g fill="none" strokeWidth="1.9">
      <path d="M2.5 5L4.7 1.2H7" stroke="#4285f4" />
      <path d="M7 1.2h2.3L11.5 5" stroke="#ea4335" />
      <path d="M11.5 5L9.3 8.8H7" stroke="#ea4335" />
      <path d="M7 8.8H4.7L2.5 5" stroke="#fbbc04" />
    </g>
  ),
  mfp: (
    <>
      <path d="M1.5-1.5h9l2 3V12h-9L1.5 9z" fill="#2b2c2f" />
      <path d="M3 1.5h9M4 4h7" stroke="#55575c" strokeWidth=".8" />
    </>
  ),
};

function Art({ children, className = "h-[11px] w-[14px]" }: { children: ReactNode; className?: string }) {
  return (
    <svg viewBox="0 0 14 11" className={`${className} overflow-visible`}>
      {children}
    </svg>
  );
}

// share is the part of the tile outline drawn in the strong blue
const tiles: { name: string; share: number; icon: ReactNode }[] = [
  { name: "Ubuntu S...", share: 1, icon: <Art>{art.server}</Art> },
  { name: "COHENL...", share: 0.35, icon: <Art>{art.laptop}</Art> },
  { name: "BOH - U6+", share: 0.3, icon: <Art>{art.disc}</Art> },
  { name: "FOH - UAP", share: 0.12, icon: <Art>{art.antenna}</Art> },
  { name: "Akamai.net", share: 0.08, icon: <Art>{art.akamai}</Art> },
  { name: "CLSTREA...", share: 0.07, icon: <Art>{art.tower}</Art> },
  { name: "YouTube", share: 0.06, icon: <Art>{art.youtube}</Art> },
  { name: "COHENIP...", share: 0.05, icon: <Art>{art.printer}</Art> },
  { name: "SSL/TLS", share: 0.04, icon: <Art>{art.shield}</Art> },
  { name: "Speedtest...", share: 0.03, icon: <Art>{art.speedtest}</Art> },
  { name: "Morgansi...", share: 0.01, icon: <Art>{art.watch}</Art> },
  { name: "Morgans-...", share: 0.01, icon: <Art>{art.phone}</Art> },
  { name: "Google U...", share: 0.01, icon: <Art>{art.gdocs}</Art> },
  { name: "Lounge R...", share: 0.01, icon: <Art>{art.vacuum}</Art> },
  { name: "Cohen's i...", share: 0.01, icon: <Art>{art.iphone}</Art> },
  { name: "Facebook", share: 0.01, icon: <FaFacebook className="h-[10px] w-[10px] text-[#1877f2]" /> },
  { name: "Samsung ...", share: 0.01, icon: <Art>{art.tv}</Art> },
  {
    name: "PornHub....",
    share: 0.01,
    icon: <span className="rounded-[1px] bg-[#f90] px-px text-[5px] leading-[7px] font-black text-black">hub</span>,
  },
  { name: "QUIC", share: 0.01, icon: <Art>{art.quic}</Art> },
  { name: "ChromeC...", share: 0, icon: <Art>{art.dongle}</Art> },
  { name: "Garage - ...", share: 0, icon: <Art>{art.disc}</Art> },
  {
    name: "Instagram",
    share: 0,
    icon: (
      <FaInstagram className="h-[11px] w-[11px] rounded-[2px] bg-linear-to-tr from-[#f58529] via-[#dd2a7b] to-[#8134af] p-px text-white" />
    ),
  },
  { name: "U7 Outdo...", share: 0, icon: <Art>{art.ap}</Art> },
  { name: "iTunes/Ap...", share: 0, icon: <Art>{art.itunes}</Art> },
  { name: "Man Cave...", share: 0, icon: <Art>{art.antenna}</Art> },
  { name: "Spotify", share: 0, icon: <FaSpotify className="h-[11px] w-[11px] bg-black p-px text-[#1ed760]" /> },
  { name: "Google", share: 0, icon: <FcGoogle className="h-3 w-3" /> },
  { name: "Gmail", share: 0, icon: <Art>{art.gmail}</Art> },
  { name: "Google St...", share: 0, icon: <Art>{art.gstatic}</Art> },
  { name: "Brother P...", share: 0, icon: <Art>{art.mfp}</Art> },
];

function TilesCard() {
  return (
    <section className={`${card} pt-2 pr-[7px] pb-[7px] pl-[5px]`}>
      <ul className="flex w-[1110px] justify-between">
        {tiles.map((t) => (
          <li key={t.name} className="relative flex w-8 flex-col items-center">
            <span className="relative flex h-[27px] w-[27px] items-center justify-center">
              <svg viewBox="0 0 27 27" className="absolute inset-0 h-full w-full" fill="none">
                <rect x=".8" y=".8" width="25.4" height="25.4" rx="4" fill="#f6f6f8" stroke="#66a9ff" strokeWidth="1.5" />
                <path
                  d="M13.5 .8H22.2A4 4 0 0 1 26.2 4.8V22.2A4 4 0 0 1 22.2 26.2H4.8A4 4 0 0 1 .8 22.2V4.8A4 4 0 0 1 4.8 .8Z"
                  pathLength="100"
                  stroke="#1f7dff"
                  strokeWidth="1.5"
                  strokeDasharray={`${t.share * 100} 200`}
                />
              </svg>
              <span className="relative flex">{t.icon}</span>
            </span>
            <span className="mt-[2px] text-[7px] leading-[10px] whitespace-nowrap text-[#808893]">{t.name}</span>
            {t.name === "COHENIP..." && (
              <>
                <span className="absolute -top-[10px] h-[46px] w-[46px] rounded-full bg-[#3b86ea]/20" />
                <span className="absolute top-px h-[25px] w-[25px] rounded-[4px] bg-[#3b86ea]/30" />
              </>
            )}
          </li>
        ))}
      </ul>
    </section>
  );
}

const retries = [
  { count: "", color: "bg-[#fdeaea]" },
  { count: "1", color: "bg-[#f5a524]" },
  { count: "", color: "bg-[#eefaf1]" },
  { count: "1", color: "bg-[#62d984]" },
  { count: "1", color: "bg-[#62d984]" },
  { count: "2", color: "bg-[#62d984]" },
];

const pins = [
  { dbm: -71, label: "" },
  { dbm: -67, label: "" },
  { dbm: -64, label: "2" },
];

function RadioCard() {
  return (
    <section className={`${card} px-[7px] pt-[7px] pb-[7px] text-[8px] text-[#808893]`}>
      <div className="flex gap-[11px]">
        <div className="grid w-[85px] shrink-0 grid-cols-2 gap-[5px] text-[#50565e]">
          <button className="h-[23px] rounded-[2px] border border-[#f0f1f2]">2.4 GHz</button>
          <button className="h-[23px] rounded-[2px] border border-[#80b7ff]">5 GHz</button>
          <button disabled className="col-span-2 h-[23px] rounded-[2px] border border-[#f0f1f2] text-[#c6c9ce]">
            6 GHz
          </button>
        </div>
        <div className="flex-1">
          <div className="flex h-3 items-center justify-between">
            <h3 className="text-[#50565e]">AP Radio TX Retries</h3>
            <button aria-label="AP radio details" className="text-[#676f79]">
              <Chevron />
            </button>
          </div>
          <div className="mt-[5px] grid grid-cols-6 gap-[3px]">
            {retries.map((r, i) => (
              <span
                key={i}
                className={`h-4 rounded-[2px] text-center text-[9px] leading-4 font-bold text-white ${r.color}`}
              >
                {r.count}
              </span>
            ))}
          </div>
          <div className="mt-[5px] flex justify-between leading-3">
            {["35%+", "25%", "20%", "15%", "10%", "5%", "0%"].map((l) => (
              <span key={l}>{l}</span>
            ))}
          </div>
        </div>
        <div className="flex-1">
          <div className="flex h-3 items-center">
            <h3 className="text-[#50565e]">WiFi Connectivity</h3>
            <span className="ml-[6px] border-l border-[#f0f1f2] pl-[6px] leading-[9px]">
              Success <span className="text-[#62d984]">100%</span>
            </span>
            <button aria-label="WiFi connectivity details" className="ml-auto text-[#676f79]">
              <Chevron />
            </button>
          </div>
          <div className="mt-1 grid grid-cols-4 gap-[3px]">
            {["Association", "Authentication", "DHCP", "DNS"].map((l) => (
              <div key={l}>
                <div className="leading-3">{l}</div>
                <div className="mt-[2px] h-1 bg-[#62d984]" />
                <div className="mt-[2px] leading-3 text-[#62d984]">100%</div>
              </div>
            ))}
          </div>
        </div>
      </div>

      <div className="mt-2 flex justify-between border-t border-[#f0f1f2] pt-[7px]">
        <div className="flex h-[14px] items-center gap-1 text-[#39cc64]">
          <svg viewBox="0 0 12 12" className="h-3 w-3" fill="none">
            <circle cx="6" cy="6" r="5.7" fill="#62d984" />
            <path d="M3.6 6.2l1.7 1.6 3.2-3.4" stroke="#fff" />
          </svg>
          AP Density is Good
        </div>
        <button aria-label="AP density details" className="text-[#676f79]">
          <Chevron />
        </button>
      </div>

      <div className="relative mt-3">
        <div className="h-[7px] rounded-[1px] bg-[linear-gradient(90deg,#ffc9d3_0%,#ffe8cb_25%,#cffdd3_58%,#cffdd3_82%,#ffe8cb_98%,#ffc9d3_100%)]" />
        <svg viewBox="0 0 2282 8" preserveAspectRatio="none" className="block h-2 w-full" stroke="#e6e8ea">
          {Array.from({ length: 61 }, (_, i) => (
            <path key={i} d={`M${1.5 + i * 37.98} 0V${i % 5 === 0 ? 8 : 3}`} vectorEffect="non-scaling-stroke" />
          ))}
        </svg>
        {pins.map((p) => (
          <span
            key={p.dbm}
            className="absolute -top-3 flex -translate-x-1/2 flex-col items-center"
            style={{ left: `${((p.dbm + 90) / 60) * 100}%` }}
          >
            <span
              className={`flex h-4 w-4 items-center justify-center rounded-full border border-[#62d984] text-[#39cc64] ${
                p.label ? "bg-[#cdf5d8]" : "bg-[#ecf8ef]"
              }`}
            >
              {p.label || <span className="h-[9px] w-[9px] rounded-[3px] bg-[#f3f4f4]" />}
            </span>
            <span className="h-[3px] border-l border-[#62d984]" />
          </span>
        ))}
      </div>
      <div className="-mt-px grid grid-cols-12 leading-3">
        {[-90, -85, -80, -75, -70, -65, -60, -55, -50, -45, -40].map((v, i) => (
          <span key={v} className={i === 0 ? "pl-[2px]" : "-translate-x-1/2 justify-self-start"}>
            {v}
          </span>
        ))}
        <span className="flex justify-between pr-[3px]">
          <span className="-translate-x-1/2">-35</span>
          <span>-30</span>
        </span>
      </div>
    </section>
  );
}

function Donut({ parts, value, label }: { parts: [number, string][]; value: string; label: string }) {
  const total = parts.reduce((s, p) => s + p[0], 0);
  let start = 0;
  return (
    <div className="relative mt-[9px] h-[100px] w-[100px] shrink-0">
      <svg viewBox="0 0 100 100" className="h-full w-full -rotate-90" fill="none">
        {parts.map(([size, color]) => {
          const from = (start / total) * 100;
          const len = (size / total) * 100;
          start += size;
          return (
            <circle
              key={color}
              cx="50"
              cy="50"
              r="46.5"
              stroke={color}
              strokeWidth="7"
              pathLength="100"
              strokeDasharray={`${Math.max(len - 0.3, 0.2)} 200`}
              strokeDashoffset={-from}
            />
          );
        })}
      </svg>
      <div className="absolute inset-0 flex flex-col items-center justify-center pt-1">
        <span className="text-[9px] leading-[13px] font-bold text-[#212327]">{value}</span>
        <span className="text-[8px] leading-[13px] text-[#808893]">{label}</span>
      </div>
    </div>
  );
}

const small = "h-[9px] w-[11px]";
const apps: { name: string; color: string; icon: ReactNode; down: string; up: string; total: string }[] = [
  { name: "Akamai.net", color: "#003c9e", icon: <Art className={small}>{art.akamai}</Art>, down: "15.9 GB", up: "181 MB", total: "16.1 GB" },
  { name: "YouTube", color: "#006fff", icon: <Art className={small}>{art.youtube}</Art>, down: "11.5 GB", up: "234 MB", total: "11.7 GB" },
  { name: "SSL/TLS", color: "#47c8ff", icon: <Art className={small}>{art.shield}</Art>, down: "8.24 GB", up: "402 MB", total: "8.65 GB" },
  { name: "Speedtest.net", color: "#39cc64", icon: <Art className={small}>{art.speedtest}</Art>, down: "718 MB", up: "3.24 GB", total: "3.96 GB" },
  { name: "Google User Content(SSL)", color: "#bde043", icon: <Art className={small}>{art.gdocs}</Art>, down: "2.28 GB", up: "62.1 MB", total: "2.34 GB" },
  { name: "Facebook", color: "#ffdb1a", icon: <FaFacebook className="h-[9px] w-[11px] text-[#1877f2]" />, down: "1.42 GB", up: "96.1 MB", total: "1.52 GB" },
];

function TrafficCard() {
  return (
    <section className={`${card} flex h-[146px] min-w-0 flex-1 px-[7px] pt-3`}>
      <Donut
        value="46.7 GB"
        label="Total Traffic"
        parts={[
          [16.1, "#003c9e"],
          [11.7, "#006fff"],
          [8.65, "#47c8ff"],
          [3.96, "#39cc64"],
          [2.34, "#bde043"],
          [1.52, "#ffdb1a"],
          [1.1, "#f9a825"],
          [0.7, "#ee3b45"],
          [0.35, "#a15ddb"],
          [0.25, "#66a3ff"],
          [0.22, "#2f8cff"],
        ]}
      />
      <div className="ml-[13px] min-w-0 flex-1">
        <table className="w-full table-fixed border-collapse text-[8px] text-[#50565e]">
          <thead>
            <tr className="h-[14px] text-[9px] leading-[14px] text-[#212327]">
              <th className="p-0 text-left font-normal">Application</th>
              <th className="p-0 text-right font-normal">Down</th>
              <th className="p-0 text-right font-normal">Up</th>
              <th className="p-0 text-right font-normal text-[#006fff]">Traffic</th>
            </tr>
          </thead>
          <tbody>
            {apps.map((a) => (
              <tr key={a.name} className="h-4 leading-4">
                <td className="p-0">
                  <span className="flex items-center">
                    <span className="h-[5px] w-[5px] rounded-full" style={{ backgroundColor: a.color }} />
                    <span className="mx-[6px]">{a.icon}</span>
                    {a.name}
                  </span>
                </td>
                <td className="p-0 text-right text-[#6bcaf7]">{a.down}</td>
                <td className="p-0 text-right text-[#a15ddb]">{a.up}</td>
                <td className="p-0 text-right">{a.total}</td>
              </tr>
            ))}
          </tbody>
        </table>
      </div>
      <button aria-label="Traffic details" className="mt-[2px] ml-[12px] flex h-[9px] w-2 text-[#676f79]">
        <Chevron />
      </button>
    </section>
  );
}

const wifiTypes = [
  { type: "WiFi 5", band: "5 GHz", color: "#003c9e", activity: 95, count: 10 },
  { type: "WiFi 6", band: "5 GHz", color: "#47c8ff", activity: 4.5, count: 2 },
  { type: "WiFi 4", band: "2.4 GHz", color: "#5a9fff", activity: 0.4, count: 28 },
  { type: "WiFi 4", band: "5 GHz", color: "#0055c8", activity: 0, count: 1 },
  { type: "WiFi 7", band: "5 GHz", color: "#006fff", activity: 0, count: 2 },
];

function WifiCard() {
  return (
    <section className={`${card} flex h-[146px] min-w-0 flex-1 px-[7px] pt-3`}>
      <Donut
        value="43"
        label="Total Connections"
        parts={[
          [28, "#5a9fff"],
          [10, "#003c9e"],
          [2, "#006fff"],
          [2, "#47c8ff"],
          [1, "#0055c8"],
        ]}
      />
      <div className="ml-[13px] min-w-0 flex-1">
        <table className="w-full table-fixed border-collapse text-[8px] text-[#50565e]">
          <thead>
            <tr className="h-[14px] text-[9px] leading-[14px] text-[#212327]">
              <th className="p-0 text-left font-normal">Type</th>
              <th className="p-0 text-left font-normal text-[#006fff]">Activity</th>
              <th className="p-0 text-right font-normal">Experience</th>
              <th className="p-0 text-right font-normal">Connections</th>
            </tr>
          </thead>
          <tbody>
            {wifiTypes.map((w) => (
              <tr key={w.color} className="h-4 leading-4">
                <td className="p-0">
                  <span className="flex items-center">
                    <span className="mr-[6px] h-[5px] w-[5px] rounded-full" style={{ backgroundColor: w.color }} />
                    {w.type}
                    <span className="ml-[5px] border-l border-[#f0f1f2] pl-[6px]">{w.band}</span>
                  </span>
                </td>
                <td className="p-0">
                  <div className="h-[5px] overflow-hidden rounded-full bg-[#ededee]">
                    <div
                      className="h-full rounded-full bg-linear-to-r from-[#2f86ff] to-[#66ccff]"
                      style={{ width: `${w.activity}%` }}
                    />
                  </div>
                </td>
                <td className="p-0 text-right text-[#39cc64]">Excellent</td>
                <td className="p-0 text-right">{w.count}</td>
              </tr>
            ))}
          </tbody>
        </table>
      </div>
      <button aria-label="WiFi details" className="mt-[2px] ml-[12px] flex h-[9px] w-2 text-[#676f79]">
        <Chevron />
      </button>
    </section>
  );
}

export default function App() {
  return (
    <div className="relative flex min-h-screen flex-col overflow-hidden border-[5px] border-[#e3f800] bg-[#fefefe] font-['Lato','Noto_Sans',sans-serif]">
      <TopBar />
      <div className="flex flex-1">
        <Rail />
        <div className="flex min-w-0 flex-1 items-start gap-[11px] p-[11px]">
          <Sidebar />
          <main className="min-w-0 flex-1">
            <ActivityCard />
            <div className="mt-2">
              <TilesCard />
            </div>
            <div className="mt-[11px]">
              <RadioCard />
            </div>
            <div className="mt-[10px] flex gap-[10px]">
              <TrafficCard />
              <WifiCard />
            </div>
          </main>
        </div>
      </div>

      <button
        aria-label="Open panel"
        className="absolute -right-[5px] bottom-[213px] flex h-[34px] w-[34px] items-center justify-center rounded-full bg-white pr-1 text-[#50565e] shadow-[0_1px_8px_rgba(0,0,0,0.25)]"
      >
        <Chevron className="rotate-180" />
      </button>
      <span className="absolute right-[25px] bottom-0 border border-[#8b8b8b] bg-[#f3f3f3] px-[3px] font-['Open_Sans','Noto_Sans',sans-serif] text-[8px] leading-[12px] text-[#404040]">
        192.168.2.1
      </span>
    </div>
  );
}
